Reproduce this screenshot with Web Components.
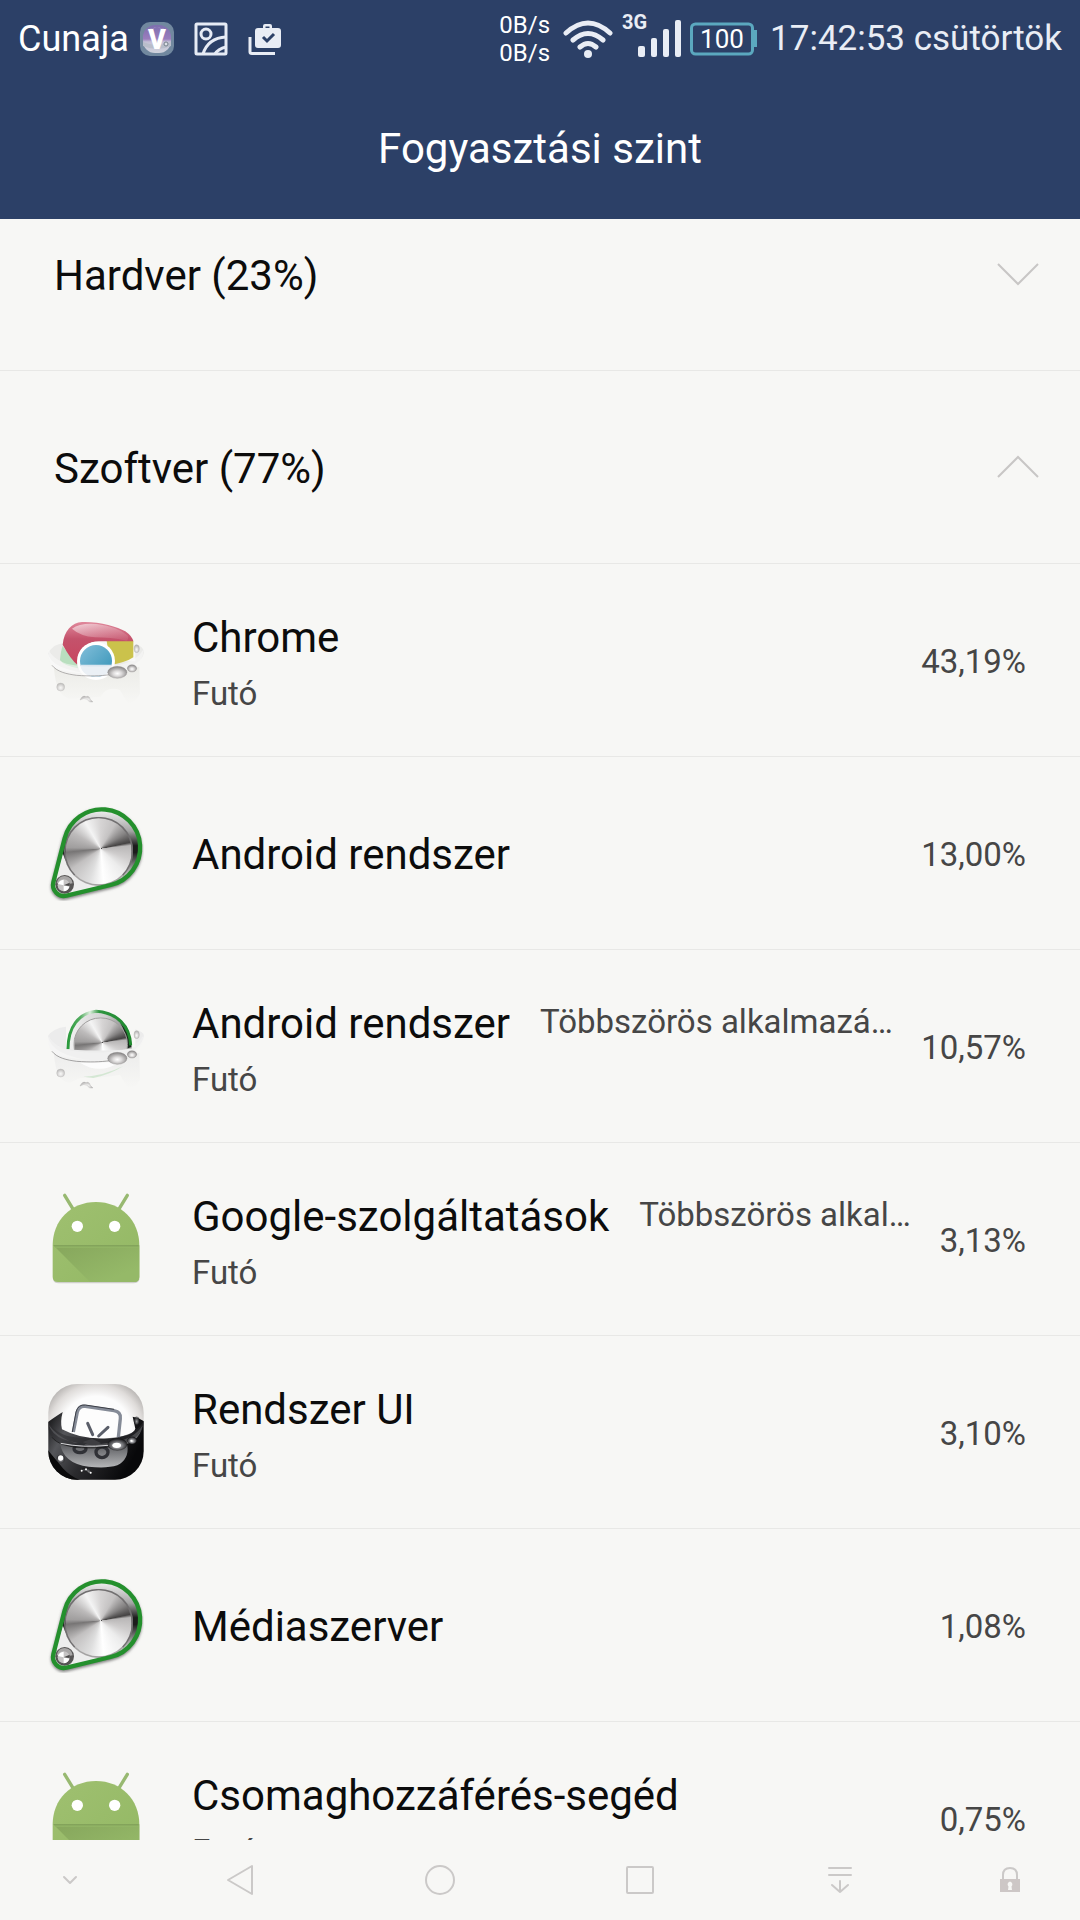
<!DOCTYPE html>
<html lang="hu">
<head>
<meta charset="utf-8">
<meta name="viewport" content="width=device-width, initial-scale=1">
<title>Fogyasztási szint</title>
<style>
    html, body {
        height: 100%;
        margin: 0;
    }
    body {
        background: #f7f7f5;
        font-family: Roboto, "Noto Sans", sans-serif;
    }
</style>
</head>
<body>
<power-screen>
    <status-bar slot="top" carrier="Cunaja" up="0B/s" down="0B/s" network="3G" battery="100">17:42:53 csütörtök</status-bar>
    <title-bar slot="top">Fogyasztási szint</title-bar>

    <usage-section>Hardver (23%)</usage-section>
    <usage-section open>Szoftver (77%)
        <app-row slot="apps" icon="chrome" status="Futó" percent="43,19%">Chrome</app-row>
        <app-row slot="apps" icon="dial" percent="13,00%">Android rendszer</app-row>
        <app-row slot="apps" icon="dialGlass" status="Futó" note="Többszörös alkalmazá…" percent="10,57%">Android rendszer</app-row>
        <app-row slot="apps" icon="android" status="Futó" note="Többszörös alkal…" percent="3,13%">Google-szolgáltatások</app-row>
        <app-row slot="apps" icon="systemUi" status="Futó" percent="3,10%">Rendszer UI</app-row>
        <app-row slot="apps" icon="dial" percent="1,08%">Médiaszerver</app-row>
        <app-row slot="apps" icon="android" status="Futó" percent="0,75%">Csomaghozzáférés-segéd</app-row>
    </usage-section>

    <nav-bar slot="bottom"></nav-bar>
</power-screen>

<script>
// Rim, water line and drops shared by the icons that sit in a glass
const glass = (rim, edge) => `
    <path d="M56 148C50 190 72 214 124 224C160 229 220 228 246 224C300 214 342 190 341 146C326 176 292 194 246 197C190 203 120 200 92 184C70 172 60 160 56 148Z" fill="${rim}" opacity=".55"/>
    <path d="M66 196C82 216 110 222 140 226C180 229 210 228 240 224" fill="none" stroke="${edge}" stroke-width="2"/>
    <g stroke="${edge}" stroke-width="1" fill="url(#drop)">
        <ellipse cx="320" cy="146" rx="8" ry="12" opacity=".6"/>
        <ellipse cx="262" cy="217" rx="29" ry="18"/>
        <ellipse cx="306" cy="205" rx="14" ry="11"/>
        <circle cx="92" cy="261" r="12" opacity=".5"/>
        <path d="M150 300Q158 284 168 290Q178 286 181 298L189 306Q176 308 172 298Q162 292 150 300Z" opacity=".6"/>
    </g>`;

const dropGradient = (middle, outer) => `
    <radialGradient id="drop" cx=".5" cy=".6" r=".55">
        <stop offset="0" stop-color="#fff"/><stop offset=".4" stop-color="${middle}"/><stop offset="1" stop-color="${outer}"/>
    </radialGradient>`;

const steel = 'conic-gradient(from 0deg at 53% 46%, #d6d4d4, #c4c2c2 30deg, #848282 58deg, #454343 78deg, #b9b7b7 84deg, #d0cece 110deg, #ececec 135deg, #fff 175deg, #dedede 200deg, #c2c0c0 235deg, #777575 264deg, #a09e9e 272deg, #bdbbbb 300deg, #f4f4f4 330deg, #d6d4d4)';

const icons = {
    chrome: `
        <svg viewBox="54 36 288 288">
            <defs>${dropGradient('#dcdada', '#8c8a8a')}
                <linearGradient id="red" x2="0" y2="1"><stop offset="0" stop-color="#e0889b"/><stop offset=".4" stop-color="#c4526b"/><stop offset="1" stop-color="#c8455f"/></linearGradient>
                <linearGradient id="shine" x2="1" y2="1"><stop offset="0" stop-color="#fff"/><stop offset="1" stop-color="#d98a9b" stop-opacity=".3"/></linearGradient>
                <linearGradient id="blue" x2="1" y2="1"><stop offset="0" stop-color="#83bfda"/><stop offset="1" stop-color="#3392b6"/></linearGradient>
                <linearGradient id="haze" x2="0" y2="1"><stop offset="0" stop-color="#e9e9e4"/><stop offset="1" stop-color="#f7f7f5"/></linearGradient>
            </defs>
            <path d="M72 205Q190 240 328 200L330 280Q320 305 294 312L270 270Q230 256 212 290L120 296Q78 290 72 205Z" fill="url(#haze)" opacity=".8"/>
            <path d="M54 160Q70 132 100 130V184H316V132Q342 140 342 158Q330 212 196 222Q64 212 54 160Z" fill="#ebebe9"/>
            <path d="M98 138L140 192L150 206Q100 198 90 180Q92 154 98 138Z" fill="#b9dfbf"/>
            <path d="M230 122H310V172Q290 186 240 196Z" fill="#cbc24b"/>
            <path d="M98 134C102 92 126 68 156 66C206 64 262 80 286 94Q306 108 310 124H206Q162 126 146 164L142 194Q122 178 98 134Z" fill="url(#red)"/>
            <path d="M126 86Q150 68 200 72Q264 80 292 106Q298 116 290 122Q240 112 196 112Q150 108 126 86Z" fill="url(#shine)" opacity=".65"/>
            <circle cx="198" cy="183" r="57" fill="#fff"/>
            <circle cx="198" cy="183" r="48" fill="url(#blue)"/>
            <path d="M150 194H246Q238 230 198 231Q158 230 150 194Z" fill="#d9e5ef"/>
            ${glass('#fafafa', '#8f8d8c')}
        </svg>`,
    dial: `
        <svg viewBox="54 75 288 288">
            <defs>
                <linearGradient id="back" x2="0" y2="1"><stop offset="0" stop-color="#f2f2f2"/><stop offset=".25" stop-color="#a5a5a5"/><stop offset=".42" stop-color="#1c1c1c"/><stop offset=".5" stop-color="#1c1c1c"/><stop offset=".7" stop-color="#aaa"/><stop offset="1" stop-color="#eee"/></linearGradient>
                <filter id="soft" x="-10%" y="-10%" width="120%" height="120%"><feGaussianBlur stdDeviation="4"/></filter>
            </defs>
            <path d="M104 178A115 115 0 1 1 242 320L110 352A33 33 0 0 1 70 312Z" fill="none" stroke="#777" stroke-width="12" filter="url(#soft)"/>
            <path d="M104 175A115 115 0 1 1 242 315L110 347A33 33 0 0 1 70 307Z" fill="url(#back)"/>
            <path d="M98 220L78 292L128 340L204 318Q120 290 98 220Z" fill="#ededed"/>
            <foreignObject x="102" y="110" width="208" height="208"><div style="box-sizing:border-box;height:208px;border:5px solid #716f70;border-bottom-color:#a5a3a3;border-radius:50%;background:${steel}"></div></foreignObject>
            <circle cx="104" cy="313" r="28" fill="#565454"/>
            <path d="M80 310Q84 288 104 288Q126 290 128 310L104 314Z" fill="#a8a6a6"/>
            <circle cx="101" cy="316" r="18" fill="#c6c4c4"/>
            <path d="M101 316L84 312Q88 300 101 299ZM101 316L118 320Q114 332 101 334Z" fill="#fff"/>
            <path d="M101 316L119 308V318Z" fill="#4b4949"/>
            <path d="M104 175A115 115 0 1 1 242 315L110 347A33 33 0 0 1 70 307Z" fill="none" stroke="#24902d" stroke-width="13"/>
        </svg>`,
    dialGlass: `
        <svg viewBox="54 36 288 288">
            <defs>${dropGradient('#dcdada', '#8c8a8a')}
                <linearGradient id="belt"><stop offset="0" stop-color="#2a9a3c"/><stop offset=".2" stop-color="#55ad62"/><stop offset=".35" stop-color="#dcefdc"/><stop offset=".5" stop-color="#2f9540"/><stop offset="1" stop-color="#1e8a2e"/></linearGradient>
                <linearGradient id="haze" x2="0" y2="1"><stop offset="0" stop-color="#e6e6e6"/><stop offset="1" stop-color="#f7f7f5"/></linearGradient>
                <linearGradient id="inner"><stop offset="0" stop-color="#f3f3f3"/><stop offset=".6" stop-color="#d0d0d0"/><stop offset="1" stop-color="#777"/></linearGradient>
                <clipPath id="above"><path d="M54 36H342V182Q210 206 54 182Z"/></clipPath>
            </defs>
            <path d="M72 205Q190 240 328 200L330 280Q320 305 294 308L270 266Q220 276 150 276L120 290Q78 290 72 205Z" fill="url(#haze)" opacity=".6"/>
            <path d="M160 272Q220 270 280 240Q240 266 190 276Z" fill="#bfe0c0" opacity=".6"/>
            <path d="M54 150Q70 126 108 122V184H316V130Q342 138 342 150Q330 212 196 224Q64 212 54 150Z" fill="#ececec"/>
            <g clip-path="url(#above)">
                <path d="M110 190C108 120 142 80 198 74C262 76 304 116 306 190Z" fill="url(#inner)"/>
                <path d="M270 110Q302 136 304 186L284 190Q292 140 270 110Z" fill="#1b2a1e"/>
                <foreignObject x="130" y="94" width="164" height="164"><div style="box-sizing:border-box;height:164px;border:3px solid #a09e9e;border-radius:50%;background:${steel}"></div></foreignObject>
                <path d="M114 190C114 122 146 82 198 76C262 80 300 120 302 178" fill="none" stroke="url(#belt)" stroke-width="9"/>
            </g>
            <path d="M150 230Q210 268 270 228Z" fill="#fff" opacity=".8"/>
            ${glass('#f4f4f4', '#7c7a7a')}
        </svg>`,
    android: `
        <svg viewBox="54 63 288 288">
            <defs>
                <linearGradient id="body" x2="1" y2="1"><stop offset="0" stop-color="#9fc070"/><stop offset="1" stop-color="#93b864"/></linearGradient>
                <linearGradient id="fold" x2="0" y2="1"><stop offset="0" stop-color="#7f9f58"/><stop offset="1" stop-color="#94b867"/></linearGradient>
                <linearGradient id="shade" x2="1" y2="1"><stop offset="0" stop-color="#86a65c"/><stop offset=".8" stop-color="#95b968"/></linearGradient>
            </defs>
            <path d="M70 322V330Q72 340 86 340H310Q326 340 328 328V322Z" fill="#cfcfcb"/>
            <path d="M104 76L132 122M292 76L264 122" stroke="#98b971" stroke-width="10" stroke-linecap="round"/>
            <path d="M68 226C68 152 122 96 198 96S328 152 328 226V320Q328 336 312 336H84Q68 336 68 320Z" fill="url(#body)"/>
            <path d="M70 226L180 336H312Q328 336 328 320V226Z" fill="url(#shade)"/>
            <path d="M70 225H326V233H78Z" fill="url(#fold)"/>
            <circle cx="142" cy="169" r="17" fill="#fff"/><circle cx="254" cy="169" r="17" fill="#fff"/>
        </svg>`,
    systemUi: `
        <svg viewBox="54 36 288 288">
            <defs>${dropGradient('#8f9094', '#1c1c1f')}
                <radialGradient id="shell" cx=".5" cy=".5" r=".62"><stop offset=".6" stop-color="#fcfcfc"/><stop offset=".8" stop-color="#dfdcda"/><stop offset="1" stop-color="#aaa7a5"/></radialGradient>
                <linearGradient id="dark" y2=".4"><stop offset="0" stop-color="#0c0c0d"/><stop offset=".25" stop-color="#55565a"/><stop offset=".55" stop-color="#2b2b2e"/><stop offset="1" stop-color="#08080a"/></linearGradient>
                <linearGradient id="pane" x2="0" y2="1"><stop offset="0" stop-color="#55565a"/><stop offset="1" stop-color="#b5b6b8"/></linearGradient>
                <clipPath id="squircle"><rect x="55" y="36" width="286" height="287" rx="86"/></clipPath>
            </defs>
            <g clip-path="url(#squircle)">
                <path d="M54 36H342V324H54Z" fill="url(#shell)"/>
                <path d="M54 150Q70 138 98 120Q90 150 96 172Q160 206 240 198Q310 192 316 170L308 134Q326 136 342 148V324H54Z" fill="url(#dark)"/>
                <path d="M56 158Q66 188 100 202Q170 226 236 212Q310 206 338 160Q326 226 240 222Q110 232 56 158Z" fill="#9a9b9e" opacity=".65"/>
                <path d="M90 214Q160 230 292 220Q298 262 262 280Q230 290 176 284Q100 276 90 214Z" fill="url(#pane)"/>
                <path d="M54 235L100 290Q120 312 150 324H54Z" fill="#0a0a0b"/>
            </g>
            <path d="M130 180L142 120Q147 100 166 103L252 116Q274 120 271 140L265 196Q190 208 130 180Z" fill="#fdfdfd"/>
            <path d="M130 180L142 120Q147 100 166 103L252 116Q274 120 271 140L265 196" fill="none" stroke="#858b97" stroke-width="10"/>
            <path d="M127 180L138 120Q144 97 166 99L252 112" fill="none" stroke="#3b3e46" stroke-width="3"/>
            <path d="M173 154L188 188M234 166L206 192" stroke="#5a5e69" stroke-width="9" stroke-linecap="round"/>
            <path d="M158 210L186 200L214 214L186 222Z" fill="#55565a"/>
            <g fill="none" stroke="#303136" stroke-width="10"><ellipse cx="150" cy="230" rx="18" ry="12"/><ellipse cx="216" cy="241" rx="18" ry="16"/></g>
            ${glass('#2c2c2f', '#111')}
            <path d="M92 214Q160 228 234 220" fill="none" stroke="#d8d8da" stroke-width="3"/>
            <g fill="#fff"><circle cx="92" cy="258" r="8"/><ellipse cx="260" cy="220" rx="13" ry="8"/><circle cx="304" cy="206" r="3"/><circle cx="155" cy="296" r="3"/><circle cx="168" cy="292" r="3"/><circle cx="182" cy="302" r="3"/></g>
        </svg>`
};

class PowerScreen extends HTMLElement {
    constructor() {
        super();
        this.attachShadow({ mode: 'open' }).innerHTML = `
            <style>
                :host {
                    display: flex;
                    flex-direction: column;
                    height: 100vh;
                    background: #f7f7f5;
                    color: #0c0c0c;
                }
                header {
                    background: #2c4067;
                    color: #fff;
                }
                main {
                    flex: 1;
                    min-height: 0;
                    overflow-y: auto;
                    scrollbar-width: none;
                }
            </style>
            <header><slot name="top"></slot></header>
            <main><slot></slot></main>
            <slot name="bottom"></slot>
        `;
    }
    connectedCallback() {
        // the list opens slightly scrolled
        requestAnimationFrame(() => {
            this.shadowRoot.querySelector('main').scrollTop = 41;
        });
    }
}

class StatusBar extends HTMLElement {
    constructor() {
        super();
        this.attachShadow({ mode: 'open' }).innerHTML = `
            <style>
                :host {
                    display: flex;
                    justify-content: space-between;
                    align-items: center;
                    box-sizing: border-box;
                    height: 75px;
                    padding: 2px 18px 0;
                    line-height: 42px;
                    white-space: nowrap;
                }
                .left, .right {
                    display: flex;
                    align-items: center;
                }
                .left { gap: 20px; font-size: 36px; }
                .right { gap: 8px; color: #e9edf5; font-size: 35px; }
                .carrier { display: flex; align-items: center; gap: 11px; }
                .speed {
                    padding-right: 4px;
                    color: #fff;
                    font-size: 24px;
                    line-height: 28px;
                }
                .speed div { text-align: right; }
                svg { display: block; flex: none; }
                text { font-family: inherit; }
            </style>
            <div class="left">
                <span class="carrier">${this.getAttribute('carrier')}
                    <svg width="34" height="34" viewBox="0 0 34 34">
                        <defs><linearGradient id="v" x2="0" y2="1"><stop offset="0" stop-color="#7d6fae"/><stop offset=".5" stop-color="#9a7dbd"/><stop offset=".6" stop-color="#c3bfd6"/><stop offset="1" stop-color="#cfd2dc"/></linearGradient></defs>
                        <rect width="34" height="34" rx="10" fill="#71889f"/>
                        <rect x="3" y="3" width="28" height="28" rx="12" fill="url(#v)"/>
                        <path d="M7 9Q17 2 27 9L24 7Q17 4 10 7Z" fill="#e9def4"/>
                        <path d="M3 20Q17 26 31 20V24Q17 30 3 24Z" fill="#b8bdca"/>
                        <text x="17" y="27" text-anchor="middle" font-size="27" font-weight="900" fill="#fff">V</text>
                        <circle cx="26" cy="22" r="2" fill="#dde0e6" stroke="#77808d"/>
                    </svg>
                </span>
                <svg width="34" height="34" viewBox="0 0 34 34" fill="none" stroke="#e6ebf5" stroke-width="3">
                    <rect x="2" y="2" width="30" height="30" rx="1"/><circle cx="12" cy="12" r="5"/>
                    <path d="M9 32Q14 16 32 15M21 32Q24 27 32 25"/>
                </svg>
                <svg width="34" height="34" viewBox="0 0 34 34">
                    <path d="M2 15V30Q2 31.500 4 31.500H27" fill="none" stroke="#e9edf5" stroke-width="3"/>
                    <path fill="#e9edf5" fill-rule="evenodd" d="M10 6H15V4Q15 2 17 2H22Q24 2 24 4V6H30Q33 6 33 9V23Q33 26 30 26H10Q7 26 7 23V9Q7 6 10 6ZM17.500 6H21.500V4.500H17.500Z"/>
                    <path d="M15 15L19 19L26 12" fill="none" stroke="#2c4067" stroke-width="3"/>
                </svg>
            </div>
            <div class="right">
                <div class="speed"><div>${this.getAttribute('up')}</div><div>${this.getAttribute('down')}</div></div>
                <svg width="52" height="38" viewBox="0 0 52 38" fill="none" stroke="#e9edf5" stroke-width="5" stroke-linecap="round">
                    <path d="M4 13Q26-7 48 13M11 20Q26 7 41 20M18 27Q26 20 34 27"/><circle cx="26" cy="34" r="4" fill="#e9edf5" stroke="none"/>
                </svg>
                <svg width="60" height="50" viewBox="0 0 60 50" fill="#e9edf5">
                    <text x="0" y="15" font-size="20" font-weight="700">${this.getAttribute('network')}</text>
                    <rect x="16" y="32" width="7" height="11" rx="2"/><rect x="29" y="24" width="6" height="19" rx="2"/><rect x="41" y="15" width="6" height="28" rx="2"/><rect x="53" y="6" width="6" height="37" rx="2"/>
                </svg>
                <svg width="72" height="34" viewBox="0 0 72 34">
                    <rect x="1.500" y="2" width="61" height="30" rx="4" fill="none" stroke="#5ba8bf" stroke-width="3"/>
                    <path d="M63 8H67V25H63Z" fill="#5ba8bf"/>
                    <text x="32" y="26" text-anchor="middle" font-size="26" fill="#fff">${this.getAttribute('battery')}</text>
                </svg>
                <slot></slot>
            </div>
        `;
    }
}

class TitleBar extends HTMLElement {
    constructor() {
        super();
        this.attachShadow({ mode: 'open' }).innerHTML = `
            <style>
                :host { display: block; }
                h1 {
                    margin: 0;
                    padding-top: 4px;
                    font-size: 42px;
                    font-weight: 400;
                    line-height: 140px;
                    text-align: center;
                }
            </style>
            <h1><slot></slot></h1>
        `;
    }
}

class UsageSection extends HTMLElement {
    constructor() {
        super();
        const open = this.hasAttribute('open');
        this.attachShadow({ mode: 'open' }).innerHTML = `
            <style>
                :host { display: block; }
                button {
                    display: flex;
                    justify-content: space-between;
                    align-items: center;
                    box-sizing: border-box;
                    width: 100%;
                    height: 193px;
                    padding: 0 40px 0 54px;
                    border: 0;
                    border-bottom: 1px solid #e8e8e6;
                    background: none;
                    color: inherit;
                    font: inherit;
                    font-size: 42px;
                    line-height: 56px;
                    text-align: left;
                }
                span { padding-top: 4px; }
            </style>
            <button type="button" aria-expanded="${open}">
                <span><slot></slot></span>
                <svg width="44" height="24" viewBox="0 0 44 24" fill="none" stroke="#c8c6c5" stroke-width="2">
                    <path d="${open ? 'M2 22L22 2L42 22' : 'M2 2L22 22L42 2'}"/>
                </svg>
            </button>
            <div role="list"><slot name="apps"></slot></div>
        `;
    }
}

class AppRow extends HTMLElement {
    constructor() {
        super();
        const status = this.getAttribute('status');
        const note = this.getAttribute('note');
        this.setAttribute('role', 'listitem');
        this.attachShadow({ mode: 'open' }).innerHTML = `
            <style>
                :host {
                    display: flex;
                    align-items: center;
                    box-sizing: border-box;
                    height: 193px;
                    padding: 0 54px 0 48px;
                    border-bottom: 1px solid #e8e8e6;
                    white-space: nowrap;
                }
                svg {
                    display: block;
                    flex: none;
                    width: 96px;
                    height: 96px;
                }
                .info {
                    display: flex;
                    flex: 1;
                    flex-direction: column;
                    gap: 8px;
                    min-width: 0;
                    margin: 0 20px 0 48px;
                }
                .info, .percent { padding-top: 4px; }
                .name {
                    display: flex;
                    align-items: center;
                    gap: 30px;
                    font-size: 42px;
                    line-height: 56px;
                }
                .note, .status, .percent {
                    color: #464646;
                    font-size: 33px;
                    line-height: 40px;
                }
                .note {
                    overflow: hidden;
                    min-width: 0;
                    margin-bottom: 4px;
                    text-overflow: ellipsis;
                }
            </style>
            ${icons[this.getAttribute('icon')]}
            <div class="info">
                <div class="name"><span><slot></slot></span>${note ? `<span class="note">${note}</span>` : ''}</div>
                ${status ? `<div class="status">${status}</div>` : ''}
            </div>
            <span class="percent">${this.getAttribute('percent')}</span>
        `;
    }
}

class NavBar extends HTMLElement {
    constructor() {
        super();
        this.attachShadow({ mode: 'open' }).innerHTML = `
            <style>
                :host {
                    display: grid;
                    flex: none;
                    grid-template-columns: 7fr 10fr 10fr 10fr 10fr 7fr;
                    height: 80px;
                    background: #f7f7f5;
                }
                button {
                    display: grid;
                    place-items: center;
                    padding: 0;
                    border: 0;
                    background: none;
                }
                svg {
                    width: 32px;
                    height: 32px;
                    fill: none;
                    stroke: #cbc9c8;
                    stroke-width: 2;
                    stroke-linecap: round;
                    stroke-linejoin: round;
                }
            </style>
            <button type="button" aria-label="Sáv elrejtése"><svg viewBox="0 0 32 32"><path d="M10 13L16 19L22 13"/></svg></button>
            <button type="button" aria-label="Vissza"><svg viewBox="0 0 32 32"><path d="M28 2V30L4 16Z"/></svg></button>
            <button type="button" aria-label="Kezdőképernyő"><svg viewBox="0 0 32 32"><circle cx="16" cy="16" r="14"/></svg></button>
            <button type="button" aria-label="Legutóbbiak"><svg viewBox="0 0 32 32"><rect x="3" y="3" width="26" height="26" rx="1"/></svg></button>
            <button type="button" aria-label="Értesítések"><svg viewBox="0 0 32 32"><path d="M5 4H27M5 11H27M16 17V28M8 21L16 28L24 21"/></svg></button>
            <button type="button" aria-label="Zárolás"><svg viewBox="0 0 32 32"><path d="M9 16V11Q9 4 16 4T23 11V16"/><path d="M6 15H26V28H6ZM16 17.500A3 3 0 0 0 14.500 22.500L14 26H18L17.500 22.500A3 3 0 0 0 16 17.500Z" fill="#cdc7c6" fill-rule="evenodd" stroke="none"/></svg></button>
        `;
    }
}

customElements.define('power-screen', PowerScreen);
customElements.define('status-bar', StatusBar);
customElements.define('title-bar', TitleBar);
customElements.define('usage-section', UsageSection);
customElements.define('app-row', AppRow);
customElements.define('nav-bar', NavBar);
</script>
</body>
</html>
